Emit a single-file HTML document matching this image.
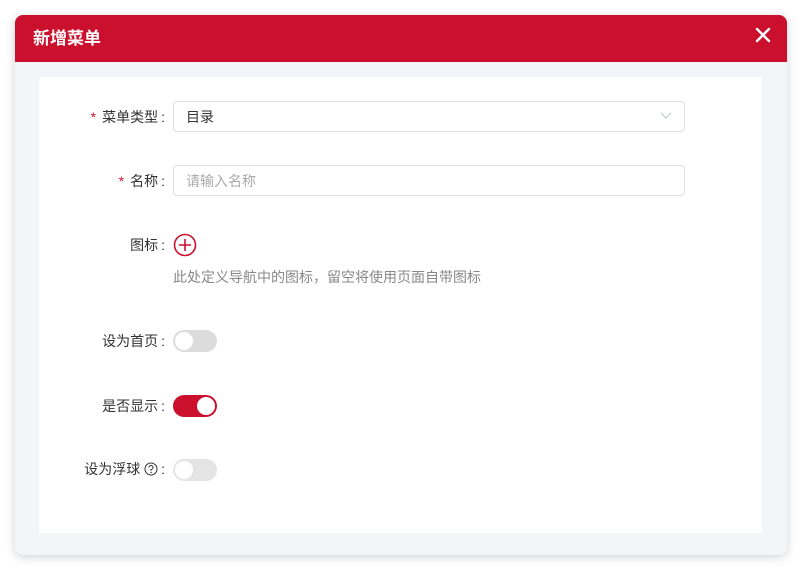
<!DOCTYPE html>
<html><head><meta charset="utf-8"><style>
*{margin:0;padding:0;box-sizing:border-box}
body{width:802px;height:570px;background:#fff;font-family:"Liberation Sans","Noto Sans CJK SC",sans-serif;position:relative;overflow:hidden}
.dlg{position:absolute;left:15px;top:15px;width:772px;height:540px;border-radius:8px;background:#f3f6f9;box-shadow:0 2px 10px rgba(0,0,0,.18);overflow:hidden}
.hd{height:47px;background:#cb102d;color:#fff;font-size:17px;font-weight:bold;padding-left:18px;line-height:47px}
.x{position:absolute;right:16px;top:12px;width:16px;height:16px}
.card{position:absolute;left:24px;top:62px;width:723px;height:456px;background:#fff}
.lbl{position:absolute;right:597px;font-size:14px;color:#333;white-space:nowrap;line-height:20px}
.lbl i{color:#cb102d;font-style:normal;margin-right:6px}
.lbl b{font-weight:normal;margin-left:3px}
.inp{position:absolute;left:134px;width:512px;height:31px;border:1px solid #dcdfe6;border-radius:4px;font-size:14px;line-height:30px;padding-left:12px}
.sw{position:absolute;left:134px;width:44px;height:22px;border-radius:11px;background:#dcdcdc}
.sw::after{content:"";position:absolute;left:2px;top:2px;width:18px;height:18px;border-radius:50%;background:#fff}
.sw.on{background:#cb102d}.sw.on::after{left:24px}
</style></head><body>
<div class="dlg">
<div class="hd">新增菜单</div>
<svg class="x" viewBox="0 0 16 16"><path d="M2 2L14 14M14 2L2 14" stroke="#fff" stroke-width="2.4" stroke-linecap="round"/></svg>
<div class="card">
<div class="lbl" style="top:30px"><i>*</i>菜单类型<b>:</b></div>
<div class="inp" style="top:24px;color:#333">目录<svg style="position:absolute;right:12px;top:10px" width="12" height="8" viewBox="0 0 12 8"><path d="M1 1L6 6L11 1" fill="none" stroke="#c0c4cc" stroke-width="1"/></svg></div>
<div class="lbl" style="top:94px"><i>*</i>名称<b>:</b></div>
<div class="inp" style="top:88px;color:#aaa">请输入名称</div>
<div class="lbl" style="top:158px">图标<b>:</b></div>
<svg style="position:absolute;left:134px;top:156px" width="24" height="24" viewBox="0 0 24 24"><circle cx="12" cy="12" r="10.5" fill="none" stroke="#cb102d" stroke-width="1.6"/><path d="M12 6V18M6 12H18" stroke="#cb102d" stroke-width="1.6"/></svg>
<div style="position:absolute;left:134px;top:190px;font-size:14px;color:#888;line-height:20px">此处定义导航中的图标，留空将使用页面自带图标</div>
<div class="lbl" style="top:254px">设为首页<b>:</b></div>
<div class="sw" style="top:253px"></div>
<div class="lbl" style="top:319px">是否显示<b>:</b></div>
<div class="sw on" style="top:318px"></div>
<div class="lbl" style="top:382px">设为浮球 <svg width="14" height="14" viewBox="0 0 14 14" style="vertical-align:-2px"><circle cx="7" cy="7" r="6" fill="none" stroke="#333" stroke-width="1"/><path d="M5 5.5A2 2 0 1 1 7 7.5V8.8" fill="none" stroke="#333" stroke-width="1"/><circle cx="7" cy="10.5" r=".7" fill="#333"/></svg><b>:</b></div>
<div class="sw" style="top:382px;background:#e4e4e4"></div>
</div>
</div>
</body></html>
